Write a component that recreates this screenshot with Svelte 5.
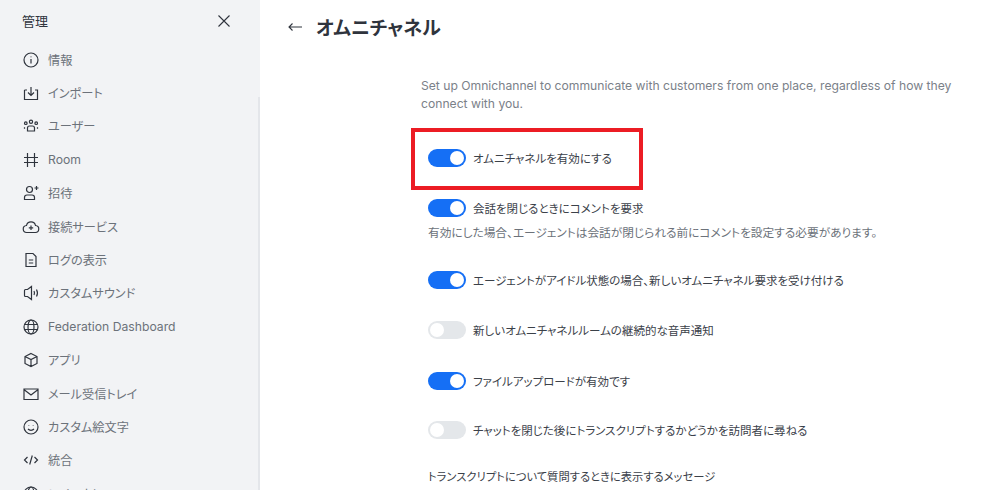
<script>
	const icons = {
		info: '<circle cx="10" cy="10" r="7"/><path d="M10 9v4.500M10 6.400v.8"/>',
		import: '<path d="M3.500 7v9.500h13V7h-2.500M6 7H3.500M10 4v8.500M7 9.500l3 3 3-3"/>',
		users: '<circle cx="10" cy="5.800" r="1.600"/><circle cx="4.800" cy="7.200" r="1.300"/><circle cx="15.200" cy="7.200" r="1.300"/><path d="M6.500 15v-3a2 2 0 0 1 2-2h3a2 2 0 0 1 2 2v3zM3.500 12.800v-1.500M16.500 12.800v-1.500"/>',
		hash: '<path d="M6.500 3v14M13.500 3v14M3 7.500h14M3 12.500h14"/>',
		invite: '<circle cx="8.500" cy="6.500" r="3"/><path d="M3.500 16.500v-2a2.500 2.500 0 0 1 2.500-2.500h5a2.500 2.500 0 0 1 2.500 2.500v2zM15.500 3v4M13.500 5h4"/>',
		cloud: '<path d="M6 15.500a3.500 3.500 0 0 1-.5-7 4.600 4.600 0 0 1 9 0 3.500 3.500 0 0 1-.5 7zM10 8.500v4.500M7.800 10.800h4.400"/>',
		file: '<path d="M5 3.500h7l3 3v10H5zM7.800 10h4.400M7.800 13h4.400"/>',
		sound: '<path d="M10.500 3.500v13L6.500 13.500H4.500a1 1 0 0 1-1-1v-5a1 1 0 0 1 1-1h2zM13 8c.6 1.200.6 2.800 0 4M15.500 6.500c1.100 2 1.100 5 0 7"/>',
		globe: '<circle cx="10" cy="10" r="7"/><ellipse cx="10" cy="10" rx="3" ry="7"/><path d="M3.500 7.500h13M3.500 12.500h13"/>',
		cube: '<path d="M10 3.500l6 3v7l-6 3-6-3v-7zM4 6.500l6 3 6-3M10 9.500v7"/>',
		mail: '<path d="M3 5h14v10.500H3zM3.500 6l6.500 5 6.500-5"/>',
		smile: '<circle cx="10" cy="10" r="7"/><path d="M7 12c1.500 1.700 4.500 1.700 6 0M7.800 8v.4M12.200 8v.4"/>',
		code: '<path d="M6.500 7l-3 3 3 3M13.500 7l3 3-3 3M11.300 5.500l-2.600 9"/>'
	};

	const menu = [
		['info', '情報'],
		['import', 'インポート'],
		['users', 'ユーザー'],
		['hash', 'Room'],
		['invite', '招待'],
		['cloud', '接続サービス'],
		['file', 'ログの表示'],
		['sound', 'カスタムサウンド'],
		['globe', 'Federation Dashboard'],
		['cube', 'アプリ'],
		['mail', 'メール受信トレイ'],
		['smile', 'カスタム絵文字'],
		['code', '統合'],
		['globe', 'レイアウト']
	];

	const settings = [
		{ label: 'オムニチャネルを有効にする', on: true, gap: 32 },
		{ label: '会話を閉じるときにコメントを要求', on: true, hint: '有効にした場合、エージェントは会話が閉じられる前にコメントを設定する必要があります。', gap: 30 },
		{ label: 'エージェントがアイドル状態の場合、新しいオムニチャネル要求を受け付ける', on: true, gap: 32 },
		{ label: '新しいオムニチャネルルームの継続的な音声通知', on: false, gap: 33 },
		{ label: 'ファイルアップロードが有効です', on: true, gap: 31 },
		{ label: 'チャットを閉じた後にトランスクリプトするかどうかを訪問者に尋ねる', on: false, gap: 29 }
	];
</script>

<div class="page">
	<aside>
		<div class="side-head">
			<span>管理</span>
			<svg width="16" height="16" viewBox="0 0 16 16"><path d="M2.500 2.500l11 11M13.500 2.500l-11 11" /></svg>
		</div>
		<nav>
			{#each menu as [icon, text]}
				<div class="item">
					<svg width="20" height="20" viewBox="0 0 20 20">{@html icons[icon]}</svg>
					<span>{text}</span>
				</div>
			{/each}
		</nav>
		<div class="scroll"></div>
	</aside>

	<main>
		<header>
			<svg width="16" height="16" viewBox="0 0 16 16"><path d="M15 8H2M5.500 4.500L2 8l3.500 3.500" /></svg>
			<h1>オムニチャネル</h1>
		</header>
		<section>
			<p class="intro">Set up Omnichannel to communicate with customers from one place, regardless of how they connect with you.</p>
			<div class="rows">
				{#each settings as s}
					<div class="setting" style="margin-bottom: {s.gap}px">
						<div class="row">
							<span class="toggle" class:on={s.on}><i></i></span>
							<span class="label">{s.label}</span>
						</div>
						{#if s.hint}
							<p class="hint">{s.hint}</p>
						{/if}
					</div>
				{/each}
				<div class="last">トランスクリプトについて質問するときに表示するメッセージ</div>
			</div>
		</section>
		<div class="mark"></div>
	</main>
</div>

<style>
	:global(body) {
		margin: 0;
		overflow: hidden;
	}
	.page {
		display: flex;
		width: 1000px;
		height: 490px;
		overflow: hidden;
		background: #fff;
		font-family: Inter, 'Noto Sans CJK JP', sans-serif;
		font-feature-settings: 'palt';
		color: #6c727a;
	}
	aside {
		position: relative;
		flex: none;
		box-sizing: border-box;
		width: 260px;
		background: #f2f3f5;
		overflow: hidden;
	}
	.scroll {
		position: absolute;
		top: 97px;
		right: 0;
		bottom: 0;
		width: 2px;
		background: #e4e6ea;
	}
	.side-head {
		display: flex;
		align-items: center;
		justify-content: space-between;
		height: 41px;
		padding: 0 28px 0 22px;
		font-size: 13px;
		color: #2f343d;
	}
	.side-head svg path {
		fill: none;
		stroke: #2f343d;
		stroke-width: 1.100;
	}
	nav {
		display: flex;
		flex-direction: column;
		padding-top: 2px;
	}
	.item {
		display: flex;
		align-items: center;
		gap: 7px;
		height: 33.400px;
		padding-left: 21px;
		font-size: 12.200px;
		white-space: nowrap;
	}
	.item svg {
		flex: none;
		width: 20px;
		height: 20px;
	}
	.item svg :global(*) {
		fill: none;
		stroke: #2f343d;
		stroke-width: 1.200;
	}
	main {
		position: relative;
		flex: 1;
		min-width: 0;
	}
	header {
		display: flex;
		align-items: center;
		gap: 13px;
		height: 53px;
		padding-left: 27px;
		box-sizing: border-box;
	}
	header svg path {
		fill: none;
		stroke: #2f343d;
		stroke-width: 1.100;
	}
	h1 {
		margin: 0;
		font-size: 19px;
		font-weight: 700;
		color: #2f343d;
	}
	section {
		padding: 24px 40px 0 161px;
	}
	.intro {
		margin: 0 0 36px;
		font-size: 12.150px;
		line-height: 18px;
		color: #7b8189;
	}
	.rows {
		padding-left: 7px;
	}
	.row {
		display: flex;
		align-items: center;
		gap: 7px;
		height: 18px;
		font-size: 11.500px;
		color: #3b4149;
		white-space: nowrap;
	}
	.toggle {
		flex: none;
		display: flex;
		align-items: center;
		justify-content: flex-start;
		box-sizing: border-box;
		width: 38px;
		height: 18px;
		padding: 2px;
		border-radius: 9px;
		background: #e4e7ea;
	}
	.toggle.on {
		justify-content: flex-end;
		background: #156ff5;
	}
	.toggle i {
		display: block;
		width: 14px;
		height: 14px;
		border-radius: 50%;
		background: #fff;
	}
	.hint {
		margin: 8px 0 0;
		font-size: 11.700px;
		line-height: 16px;
		color: #6c727a;
		white-space: nowrap;
	}
	.last {
		font-size: 11.300px;
		color: #3b4149;
		white-space: nowrap;
	}
	.mark {
		position: absolute;
		left: 151px;
		top: 128px;
		width: 232px;
		height: 62px;
		box-sizing: border-box;
		border: 4px solid #ec1c24;
	}
</style>
